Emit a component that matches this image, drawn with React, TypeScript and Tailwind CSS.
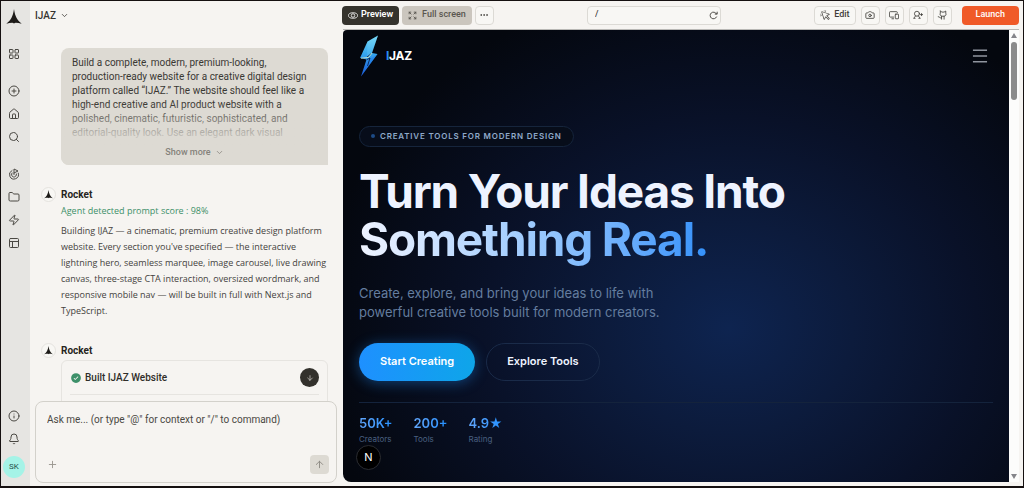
import type { ReactNode } from 'react';
import {
  ArrowDown,
  ArrowUp,
  Bell,
  Camera,
  ChevronDown,
  CirclePlus,
  Ellipsis,
  Folder,
  Goal,
  House,
  Info,
  LayoutGrid,
  Menu,
  PanelsTopLeft,
  Plus,
  Search,
  Zap,
} from 'lucide-react';
import { PiCheckCircleFill, PiCursorClick } from 'react-icons/pi';

function RocketMark({ className }: { className: string }) {
  return (
    <svg viewBox="0 0 24 24" className={className} fill="currentColor" aria-hidden="true">
      <path d="M12 0c.7 5.500 2 10 3.900 13.500 1.700 3.200 4.200 5.900 7.600 8.500-3.300-.8-6.200-1.200-8.800-1.200-1 0-1.900.3-2.700 1-.8-.7-1.700-1-2.700-1-2.600 0-5.500.4-8.800 1.200 3.400-2.600 5.900-5.300 7.600-8.500C10 10 11.300 5.500 12 0z" />
    </svg>
  );
}

function CornersIcon() {
  return (
    <svg viewBox="0 0 16 16" className="size-[9px]" fill="none" stroke="currentColor" strokeWidth="1.600" strokeLinecap="round" aria-hidden="true">
      <path d="M2 5V2h3M2 2l3.500 3.500M11 2h3v3M14 2l-3.500 3.500M2 11v3h3M2 14l3.500-3.500M11 14h3v-3M14 14l-3.500-3.500" />
    </svg>
  );
}

function EyeIcon() {
  return (
    <svg viewBox="0 0 20 14" className="h-[7px] w-[10px]" fill="none" stroke="currentColor" strokeWidth="1.600" aria-hidden="true">
      <ellipse cx="10" cy="7" rx="9" ry="5.500" />
      <circle cx="10" cy="7" r="3.500" />
    </svg>
  );
}

function ReloadIcon() {
  return (
    <svg viewBox="0 0 16 16" className="size-[9px]" fill="none" stroke="currentColor" strokeWidth="1.600" strokeLinecap="round" aria-hidden="true">
      <path d="M13.500 10.500A6 6 0 1 1 13.300 5M14.500 2v3.500H11" />
    </svg>
  );
}

function DevicesIcon() {
  return (
    <svg viewBox="0 0 24 24" fill="none" stroke="currentColor" strokeWidth="2" strokeLinecap="round" strokeLinejoin="round" aria-hidden="true">
      <path d="M11 17H3a2 2 0 0 1-2-2V6a2 2 0 0 1 2-2h15a2 2 0 0 1 2 2v1M7 21h4" />
      <rect x="15" y="10" width="8" height="11" rx="1.500" />
    </svg>
  );
}

function InviteIcon() {
  return (
    <svg viewBox="0 0 24 24" fill="none" stroke="currentColor" strokeWidth="2" strokeLinecap="round" strokeLinejoin="round" aria-hidden="true">
      <circle cx="9.500" cy="9" r="6" />
      <path d="M6 14.500 1.500 20H5M13 14.500l4.500 5.500H14M18 11h5M20.500 8.500v5" />
    </svg>
  );
}

function CatIcon() {
  return (
    <svg viewBox="0 0 24 24" fill="none" stroke="currentColor" strokeWidth="2" strokeLinecap="round" strokeLinejoin="round" aria-hidden="true">
      <path d="M8 2.500v5C7 9 7 11 8 12.500c1 1.800 3 2.500 6.500 2.500s5.500-.7 6.500-2.500c1-1.500 1-3.500 0-5v-5L17 5h-5zM11 15v7M17 15v7M11 19c-5 1-4-3-8-3" />
    </svg>
  );
}

function BoltLogo() {
  return (
    <svg viewBox="0 0 20 42" className="h-[42px] w-5" aria-hidden="true">
      <defs>
        <linearGradient id="bolt" x1="0" y1="0" x2="0" y2="1">
          <stop offset="0" stopColor="#6fd3f5" />
          <stop offset="0.45" stopColor="#35a6ee" />
          <stop offset="1" stopColor="#1c50cc" />
        </linearGradient>
      </defs>
      <path d="M19 .500 8.500 6.500 1 23l6.500 1.500L2 41.500 18.500 19l-5.500-1z" fill="url(#bolt)" />
      <path d="M19 .500 13 18l-5 3.500.5-15z" fill="#a3f0fc" fillOpacity="0.150" />
      <path d="M10 24.500 2 41.500 18.500 19z" fill="#1b7af0" fillOpacity="0.400" />
      <path d="m8 24.500 3-1.500L8.500 31M12.500 18.500 8 22" fill="none" stroke="#0a1838" strokeWidth="0.800" />
      <path d="m13 18-3.500 4.500L2 23.200" fill="none" stroke="#dff3c8" strokeWidth="0.800" />
    </svg>
  );
}

function SideButton({ label, children }: { label: string; children: ReactNode }) {
  return (
    <button type="button" aria-label={label} className="flex size-3 items-center justify-center text-[#4a4843] [&>svg]:size-3">
      {children}
    </button>
  );
}

function ToolButton({ label, children }: { label: string; children: ReactNode }) {
  return (
    <button
      type="button"
      aria-label={label}
      className="flex size-[19px] items-center justify-center rounded border border-[#dcdad5] bg-[#f8f7f4] text-[#3f3d39] [&>svg]:size-[10px]"
    >
      {children}
    </button>
  );
}

function Sidebar() {
  return (
    <nav aria-label="Workspace" className="flex w-[29px] shrink-0 flex-col items-center bg-[#e6e5e2] pt-2 pr-[3px] pb-2">
      <RocketMark className="size-4 text-[#1d1b18]" />
      <div className="mt-[23px] flex flex-col">
        <SideButton label="Projects"><LayoutGrid /></SideButton>
      </div>
      <div className="mt-[25px] flex flex-col gap-[11px]">
        <SideButton label="New"><CirclePlus /></SideButton>
        <SideButton label="Home"><House /></SideButton>
        <SideButton label="Search"><Search /></SideButton>
      </div>
      <div className="mt-[25px] flex flex-col gap-[11px]">
        <SideButton label="Goals"><Goal /></SideButton>
        <SideButton label="Files"><Folder /></SideButton>
        <SideButton label="Automations"><Zap /></SideButton>
        <SideButton label="Layouts"><PanelsTopLeft /></SideButton>
      </div>
      <div className="mt-auto flex flex-col items-center gap-[11px]">
        <SideButton label="Information"><Info /></SideButton>
        <SideButton label="Notifications"><Bell /></SideButton>
        <button type="button" className="flex size-[22px] items-center justify-center rounded-full bg-[#a5f3e7] text-[8px] text-[#24504a]">
          SK
        </button>
      </div>
    </nav>
  );
}

function Author() {
  return (
    <div className="flex items-center gap-[5px]">
      <span className="flex size-[15px] items-center justify-center rounded-full border border-[#e5e3df] bg-[#f8f7f4]">
        <RocketMark className="size-[9px] text-[#1d1b18]" />
      </span>
      <span className="text-[10px] leading-[15px] font-bold text-[#262420]">Rocket</span>
    </div>
  );
}

function ChatPanel() {
  return (
    <section aria-label="Chat" className="flex w-[312px] shrink-0 flex-col">
      <header className="flex h-7 shrink-0 items-center px-[5px]">
        <button type="button" className="flex items-center gap-1 text-[10px] font-medium text-[#35332f]">
          IJAZ
          <ChevronDown className="size-[9px]" />
        </button>
      </header>

      <div className="min-h-0 flex-1 overflow-hidden pt-[19px] pr-[14px] pl-[11px]">
        <div className="relative ml-5 flex h-[117px] flex-col overflow-hidden rounded-lg rounded-br-none bg-[#dddad3] px-[11px] pt-2 text-[#3a3833]">
          <p className="h-[86px] overflow-hidden text-[10px] leading-[14px] whitespace-nowrap">
            Build a complete, modern, premium-looking,<br />
            production-ready website for a creative digital design<br />
            platform called “IJAZ.” The website should feel like a<br />
            high-end creative and AI product website with a<br />
            polished, cinematic, futuristic, sophisticated, and<br />
            editorial-quality look. Use an elegant dark visual
          </p>
          <div className="absolute inset-x-0 bottom-0 h-[62px] bg-linear-to-t from-[#dddad3] from-35% to-[#dddad3]/0" />
          <button type="button" className="relative mt-[2px] flex items-center justify-center gap-1 text-[9px] leading-4 font-medium text-[#85827b]">
            Show more
            <ChevronDown className="size-[9px]" />
          </button>
        </div>

        <article className="mt-[22px]">
          <Author />
          <div className="ml-5 font-['Open_Sans',sans-serif] text-[9px] leading-4 whitespace-nowrap">
            <p className="mt-[1px] font-medium text-[#3d9069]">Agent detected prompt score : 98%</p>
            <p className="mt-1 text-[#44423d]">
              Building IJAZ — a cinematic, premium creative design platform<br />
              website. Every section you've specified — the interactive<br />
              lightning hero, seamless marquee, image carousel, live drawing<br />
              canvas, three-stage CTA interaction, oversized wordmark, and<br />
              responsive mobile nav — will be built in full with Next.js and<br />
              TypeScript.
            </p>
          </div>
        </article>

        <article className="mt-6">
          <Author />
          <div className="mt-[2px] ml-5 h-20 rounded-md border border-[#e6e4e0] px-2">
            <div className="flex h-[34px] items-center border-b border-[#e6e4e0] text-[10px] font-medium text-[#2f2d29]">
              <PiCheckCircleFill className="mr-[3px] size-3 text-[#3d9069]" />
              Built IJAZ Website
              <button type="button" aria-label="Scroll to latest" className="ml-auto flex size-[19px] items-center justify-center rounded-full bg-[#33312c] text-[#dddad3]">
                <ArrowDown className="size-2" />
              </button>
            </div>
          </div>
        </article>
      </div>

      <form className="mx-[5px] mb-[3px] flex h-[82px] shrink-0 flex-col rounded-lg border border-[#d3d1cb] bg-[#f6f4f1] px-[11px] pt-[10px] pb-2">
        <textarea
          aria-label="Message"
          placeholder={'Ask me... (or type "@" for context or "/" to command)'}
          className="min-h-0 w-full flex-1 resize-none bg-transparent text-[10px] leading-4 outline-none placeholder:text-[#4a4843]"
        />
        <div className="flex items-center justify-between">
          <button type="button" aria-label="Attach" className="text-[#98958e]">
            <Plus className="size-[11px]" />
          </button>
          <button type="button" aria-label="Send" className="-mr-1 flex size-[19px] items-center justify-center rounded bg-[#dddad3] text-[#8b8881]">
            <ArrowUp className="size-[11px]" />
          </button>
        </div>
      </form>
    </section>
  );
}

function Toolbar() {
  return (
    <header className="flex h-7 shrink-0 items-center justify-between text-[9px] font-medium text-[#3f3d39]">
      <div className="flex items-center gap-[3px]">
        <button type="button" className="flex h-[19px] items-center gap-[3px] rounded bg-[#35332d] px-[6px] font-semibold text-white">
          <EyeIcon />
          Preview
        </button>
        <button type="button" className="flex h-[19px] items-center gap-[5px] rounded bg-[#cbc6be] px-[6px] text-[#5a5750]">
          <CornersIcon />
          Full screen
        </button>
        <ToolButton label="More"><Ellipsis /></ToolButton>
      </div>
      <div className="flex h-[19px] w-[134px] items-center justify-between rounded border border-[#dcdad5] bg-[#f8f7f4] pr-[2px] pl-[7px]">
        <input aria-label="Path" defaultValue="/" className="min-w-0 flex-1 bg-transparent outline-none" />
        <button type="button" aria-label="Reload"><ReloadIcon /></button>
      </div>
      <div className="flex items-center gap-[5px]">
        <button type="button" className="flex h-[19px] items-center gap-[3px] rounded border border-[#dcdad5] bg-[#f8f7f4] px-[5px]">
          <PiCursorClick className="size-[11px]" />
          Edit
        </button>
        <ToolButton label="Screenshot"><Camera /></ToolButton>
        <ToolButton label="Devices"><DevicesIcon /></ToolButton>
        <ToolButton label="Invite"><InviteIcon /></ToolButton>
        <ToolButton label="GitHub"><CatIcon /></ToolButton>
        <button type="button" className="ml-[5px] h-[19px] rounded bg-[#f05a28] px-[14px] text-white">
          Launch
        </button>
      </div>
    </header>
  );
}

const stats = [
  { value: '50K+', label: 'Creators' },
  { value: '200+', label: 'Tools' },
  { value: '4.9★', label: 'Rating' },
];

function Preview() {
  return (
    <div className="relative flex min-w-0 flex-1 flex-col overflow-hidden rounded-tl-sm rounded-bl-lg bg-[#04070e] bg-[radial-gradient(ellipse_62%_78%_at_58%_66%,#0e2450_0%,#0c1b3c_30%,#091128_60%,#04070e_100%)] pr-4 pl-4 font-['Inter',sans-serif] text-[#eef3ff]">
      <div className="flex items-center pt-[5px]">
        <BoltLogo />
        <span className="ml-[7px] text-[12px] font-bold tracking-tight text-white">
          <span className="text-[#2b8cf5]">I</span>JAZ
        </span>
        <button type="button" aria-label="Open menu" className="mr-[3px] ml-auto text-[#d5dbe6]">
          <Menu className="size-5" strokeWidth={1.2} />
        </button>
      </div>

      <main className="mt-[43px]">
        <span className="inline-flex h-[21px] items-center gap-[5px] rounded-full border border-[#16253c] bg-[#070d1a] px-[11px] text-[8px] font-semibold tracking-widest text-[#8fa9c9]">
          <span className="size-1 rounded-full bg-[#1d4b86]" />
          CREATIVE TOOLS FOR MODERN DESIGN
        </span>
        <h1 className="mt-5 w-fit text-[46px] leading-[48px] font-bold tracking-tight">
          <span className="block">Turn Your Ideas Into</span>
          <span className="block w-fit bg-linear-to-r from-[#f0f4ff] via-[#93c5fd] via-55% to-[#3391fa] bg-clip-text pb-2 text-transparent">Something Real.</span>
        </h1>
        <p className="mt-[13px] text-[13px] leading-[19px] text-[#647d9f]">
          Create, explore, and bring your ideas to life with
          <br />
          powerful creative tools built for modern creators.
        </p>
        <div className="mt-[21px] flex gap-[11px] text-[11px] font-semibold">
          <button type="button" className="h-[38px] rounded-full bg-linear-to-r from-[#1e90ff] to-[#0ea5e9] px-[21px] text-white shadow-[0_2px_14px_rgba(30,144,255,0.4)]">
            Start Creating
          </button>
          <button type="button" className="h-[38px] rounded-full border border-[#1a2b49] px-5">
            Explore Tools
          </button>
        </div>
        <dl className="mt-[21px] flex gap-[21px] border-t border-[#14233c] pt-[11px]">
          {stats.map((stat) => (
            <div key={stat.label} className="flex flex-col-reverse">
              <dt className="text-[8px] leading-[14px] text-[#4a6080]">{stat.label}</dt>
              <dd className="bg-linear-to-r from-[#60a5fa] to-[#1e90ff] bg-clip-text text-[13px] leading-[18px] font-semibold text-transparent">{stat.value}</dd>
            </div>
          ))}
        </dl>
      </main>

      <button
        type="button"
        aria-label="Open developer tools"
        className="absolute bottom-3 left-[13px] flex size-[25px] items-center justify-center rounded-full border border-[#2a2c31] bg-black text-[11px] text-white"
      >
        N
      </button>
    </div>
  );
}

function ScrollTrack() {
  return (
    <div aria-hidden="true" className="flex w-[10px] shrink-0 flex-col items-center bg-[#fcfcfb] py-[3px]">
      <svg viewBox="0 0 6 5" className="h-[5px] w-[6px]" fill="#85858a"><path d="M3 0 6 5H0z" /></svg>
      <div className="mt-1 h-[58px] w-[6px] rounded-full bg-[#8b8b8b]" />
      <svg viewBox="0 0 6 5" className="mt-auto h-[5px] w-[6px]" fill="#85858a"><path d="M3 5 6 0H0z" /></svg>
    </div>
  );
}

export default function App() {
  return (
    <div className="flex h-screen overflow-hidden border border-b-2 border-[#151010] bg-[#f6f4f1] font-['Roboto',sans-serif]">
      <Sidebar />
      <ChatPanel />
      <section aria-label="Site preview" className="flex min-w-0 flex-1 flex-col pr-1 pb-1">
        <Toolbar />
        <div className="ml-[1px] flex min-h-0 flex-1 border-t border-[#b9b8b5]">
          <Preview />
          <ScrollTrack />
        </div>
      </section>
    </div>
  );
}
